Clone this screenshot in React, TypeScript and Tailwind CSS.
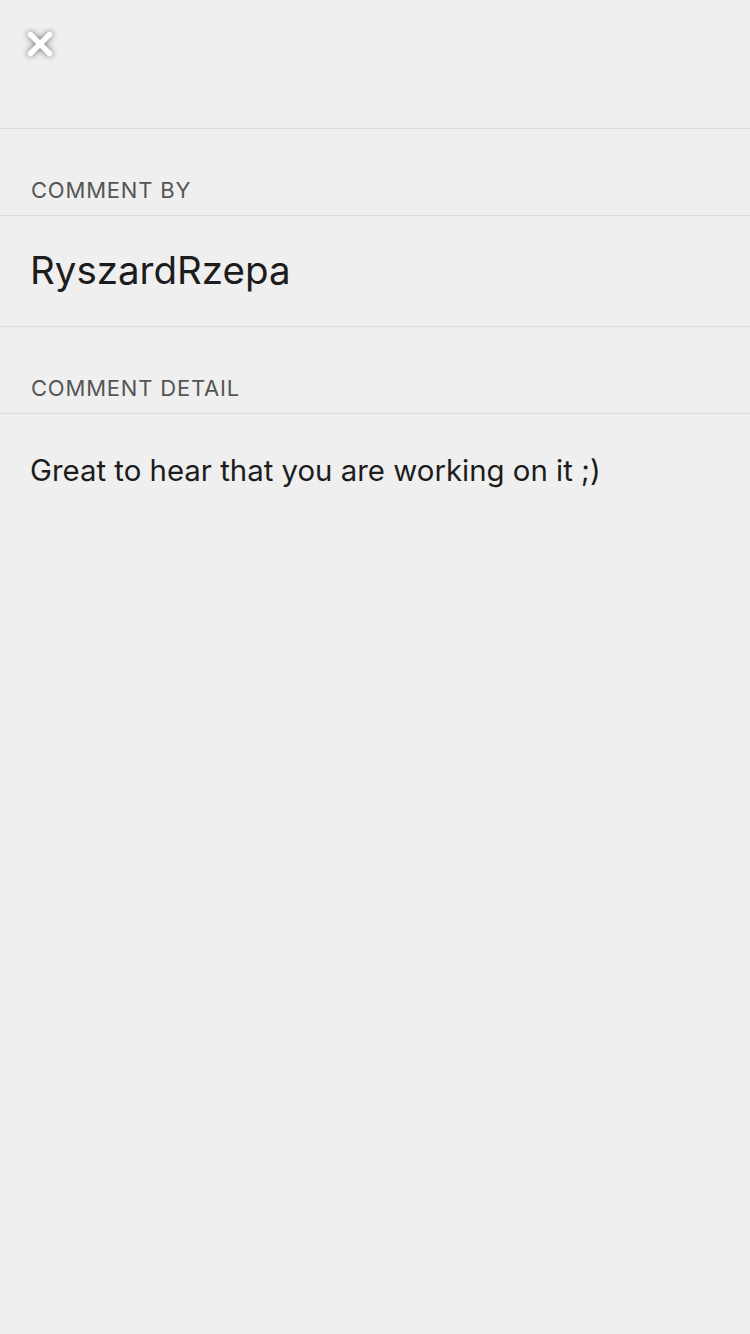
import { X } from 'lucide-react';

const font = { fontFamily: 'Inter, "Noto Sans", sans-serif' };

const SectionLabel = ({ children }: { children: string }) => (
  <div className="h-[87px] flex items-end pb-[14px] px-[31px] border-b border-[#dcdcdc]">
    <span className="text-[22px] leading-none tracking-[0.8px] text-[#555555]">{children}</span>
  </div>
);

export default function App() {
  return (
    <div className="min-h-[1334px] w-[750px] bg-[#efefef]" style={font}>
      <div className="h-[129px] border-b border-[#dcdcdc] px-[21px] pt-[25px]">
        <X
          size={38}
          strokeWidth={3.4}
          className="text-white drop-shadow-[0_0_3px_rgba(0,0,0,0.55)]"
        />
      </div>

      <SectionLabel>COMMENT BY</SectionLabel>
      <div className="h-[111px] flex items-center px-[30px] border-b border-[#dcdcdc]">
        <span className="text-[38.5px] text-[#1c1c1c]">RyszardRzepa</span>
      </div>

      <SectionLabel>COMMENT DETAIL</SectionLabel>
      <div className="px-[30px] pt-[37px]">
        <p className="text-[29.4px] leading-[40px] text-[#1c1c1c]">Great to hear that you are working on it ;)</p>
      </div>
    </div>
  );
}
